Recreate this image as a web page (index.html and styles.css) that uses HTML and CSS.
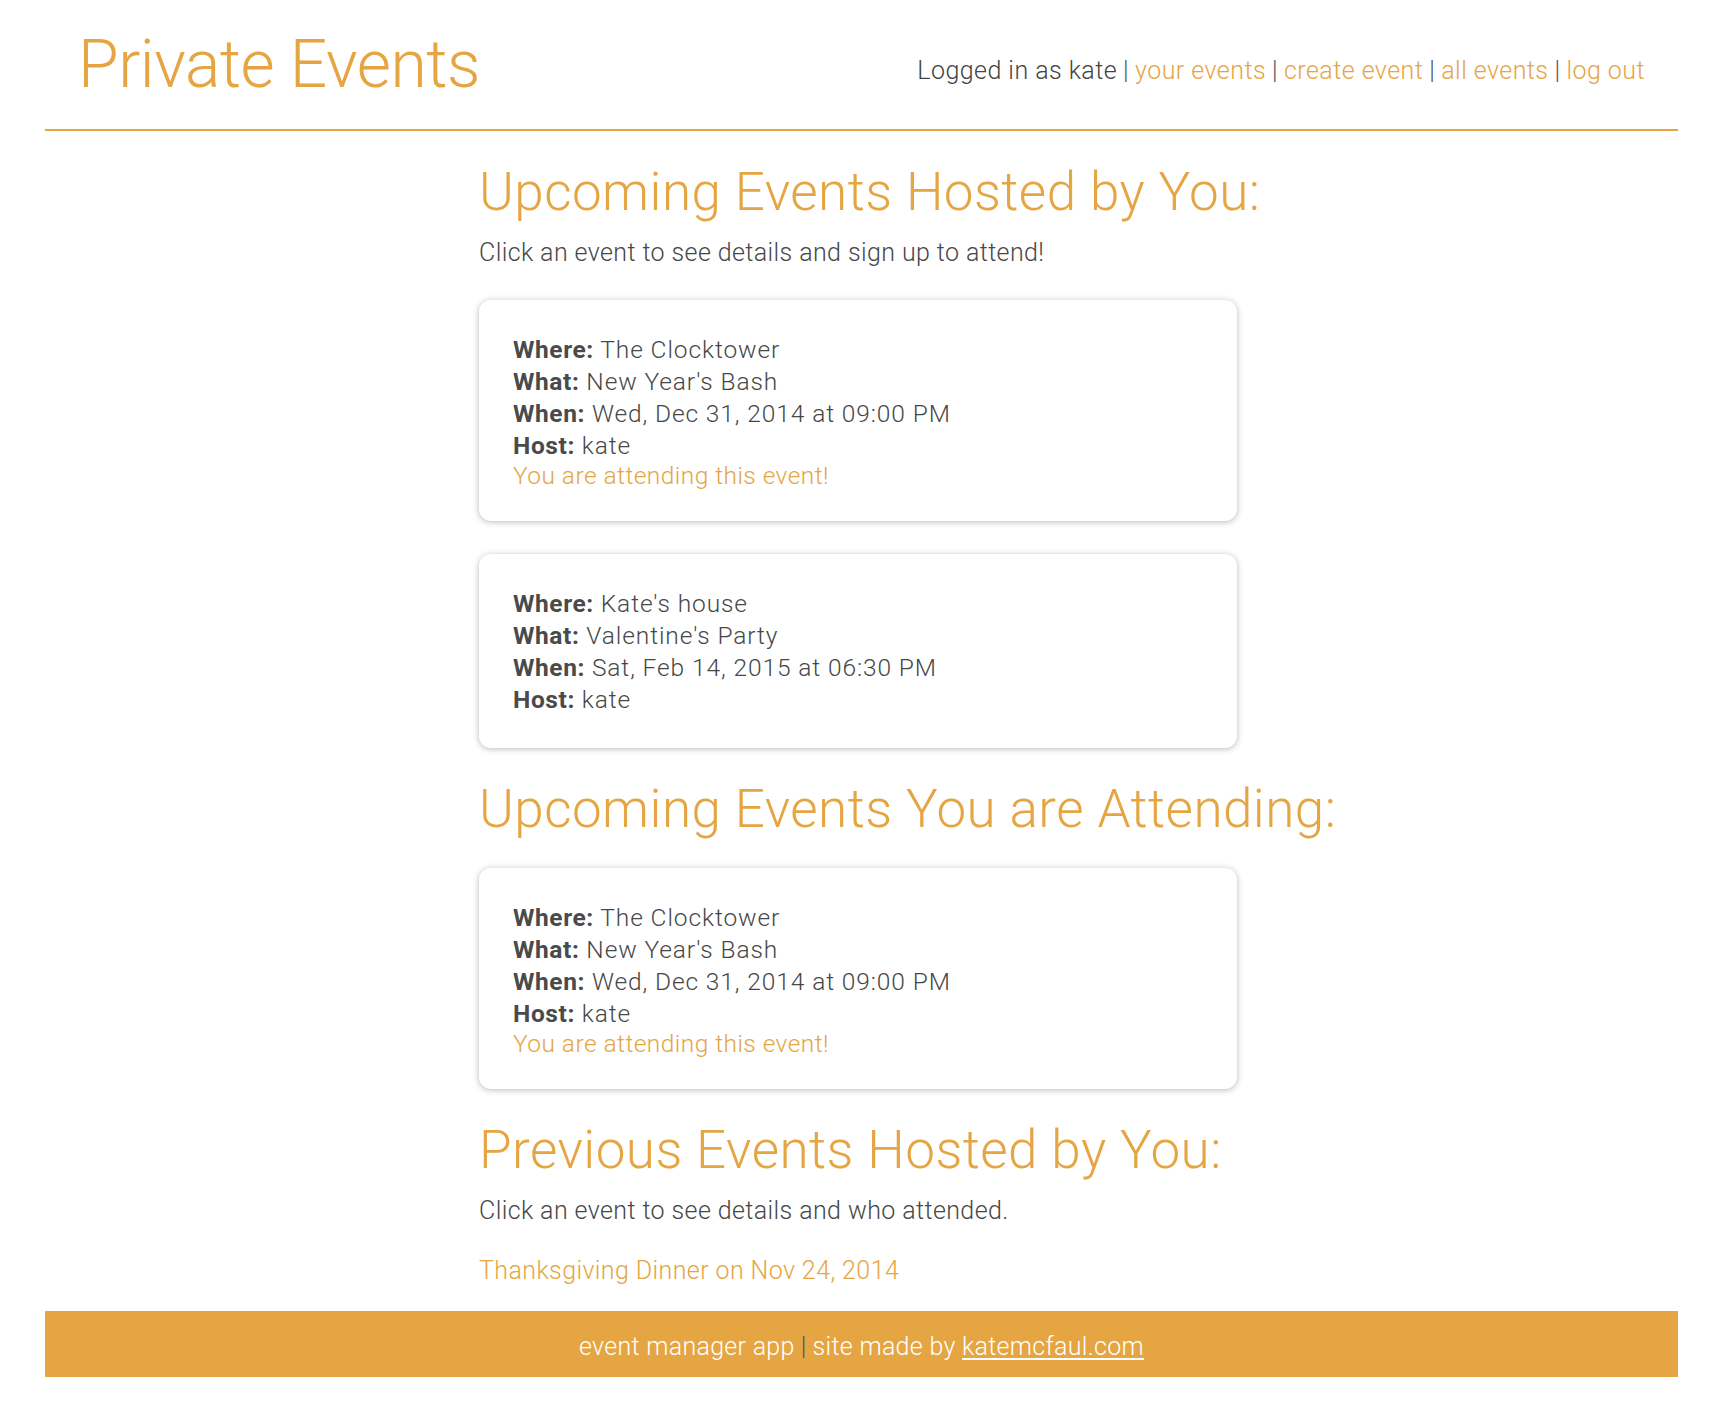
FILE: index.html
```html
<!DOCTYPE html>
<html lang="en">
<head>
<meta charset="utf-8">
<title>Private Events</title>
<link rel="stylesheet" href="styles.css">
</head>
<body>
<div class="page">
  <header class="site-header">
    <h1 class="brand">Private Events</h1>
    <nav class="nav">
      <span class="user">Logged in as kate</span>
      <span class="sep">|</span>
      <a href="#">your events</a>
      <span class="sep">|</span>
      <a href="#">create event</a>
      <span class="sep">|</span>
      <a href="#">all events</a>
      <span class="sep">|</span>
      <a href="#">log out</a>
    </nav>
  </header>

  <main class="main">
    <section class="section">
      <h2 class="section-title">Upcoming Events Hosted by You:</h2>
      <p class="intro">Click an event to see details and sign up to attend!</p>
      <a class="card" href="#">
        <div class="row"><b>Where:</b> The Clocktower</div>
        <div class="row"><b>What:</b> New Year's Bash</div>
        <div class="row"><b>When:</b> Wed, Dec 31, 2014 at 09:00 PM</div>
        <div class="row"><b>Host:</b> kate</div>
        <div class="attending">You are attending this event!</div>
      </a>
      <a class="card" href="#">
        <div class="row"><b>Where:</b> Kate's house</div>
        <div class="row"><b>What:</b> Valentine's Party</div>
        <div class="row"><b>When:</b> Sat, Feb 14, 2015 at 06:30 PM</div>
        <div class="row"><b>Host:</b> kate</div>
      </a>
    </section>

    <section class="section">
      <h2 class="section-title tight">Upcoming Events You are Attending:</h2>
      <a class="card" href="#">
        <div class="row"><b>Where:</b> The Clocktower</div>
        <div class="row"><b>What:</b> New Year's Bash</div>
        <div class="row"><b>When:</b> Wed, Dec 31, 2014 at 09:00 PM</div>
        <div class="row"><b>Host:</b> kate</div>
        <div class="attending">You are attending this event!</div>
      </a>
    </section>

    <section class="section">
      <h2 class="section-title">Previous Events Hosted by You:</h2>
      <p class="intro intro-list">Click an event to see details and who attended.</p>
      <a class="past-link" href="#">Thanksgiving Dinner on Nov 24, 2014</a>
    </section>
  </main>

  <footer class="site-footer">
    <span>event manager app</span>
    <span class="sep">|</span>
    <span>site made by <a href="#">katemcfaul.com</a></span>
  </footer>
</div>
</body>
</html>
```

FILE: styles.css
```css
html, body {
  margin: 0;
  padding: 0;
  background: #ffffff;
}

body {
  font-family: Roboto, "Liberation Sans", Arial, sans-serif;
  font-weight: 300;
  color: #474747;
}

a {
  color: #e5a542;
  text-decoration: none;
}

.page {
  margin: 0 42px 0 45px;
}

/* Header */
.site-header {
  display: flex;
  justify-content: space-between;
  align-items: flex-start;
  height: 97px;
  padding: 32px 33px 0 33px;
  border-bottom: 2px solid #e5a542;
}

.brand {
  margin: 0;
  font-size: 66px;
  line-height: 66px;
  font-weight: 300;
  color: #e5a542;
  letter-spacing: -0.5px;
}

.nav {
  margin-top: 27px;
  font-size: 25px;
  line-height: 24px;
  letter-spacing: 0.45px;
  display: flex;
  gap: 6px;
  white-space: nowrap;
}

.user {
  color: #444444;
}

.sep {
  color: #4d5464;
}

/* Main column */
.main {
  width: 758px;
  padding-right: 7px;
  margin: 0 auto;
}

.section-title {
  margin: 29px 0 0;
  font-size: 53px;
  line-height: 64px;
  font-weight: 300;
  color: #e5a542;
  white-space: nowrap;
  letter-spacing: 0.45px;
}

.section-title.tight {
  margin-bottom: 27px;
}

.intro {
  margin: 13px 0 31px;
  font-size: 25px;
  line-height: 32px;
  letter-spacing: 0.4px;
  color: #474747;
}

.intro.intro-list {
  margin-bottom: 0;
}

.card {
  display: block;
  margin-bottom: 33px;
  padding: 34px 34px 32px;
  background: #ffffff;
  border-radius: 12px;
  box-shadow: 0 1px 6px rgba(0, 0, 0, 0.28);
  color: #474747;
  font-size: 24.5px;
  letter-spacing: 0.9px;
}

.card:last-child {
  margin-bottom: 0;
}

.row {
  line-height: 32px;
}

.row b {
  font-weight: 700;
  color: #4a4a4a;
  letter-spacing: 0.6px;
}

.attending {
  line-height: 27px;
  color: #e5a542;
  letter-spacing: 0.45px;
}

.past-link {
  display: block;
  margin: 28px 0 24px;
  font-size: 25px;
  line-height: 32px;
  letter-spacing: 0.4px;
}

/* Footer */
.site-footer {
  display: flex;
  justify-content: center;
  gap: 6px;
  padding: 20px 0 14px;
  background: #e5a542;
  color: #ffffff;
  font-size: 25px;
  line-height: 32px;
  letter-spacing: 0.3px;
}

.site-footer a {
  color: #ffffff;
  text-decoration: underline;
  text-decoration-thickness: 2px;
  text-underline-offset: 3px;
}
```
